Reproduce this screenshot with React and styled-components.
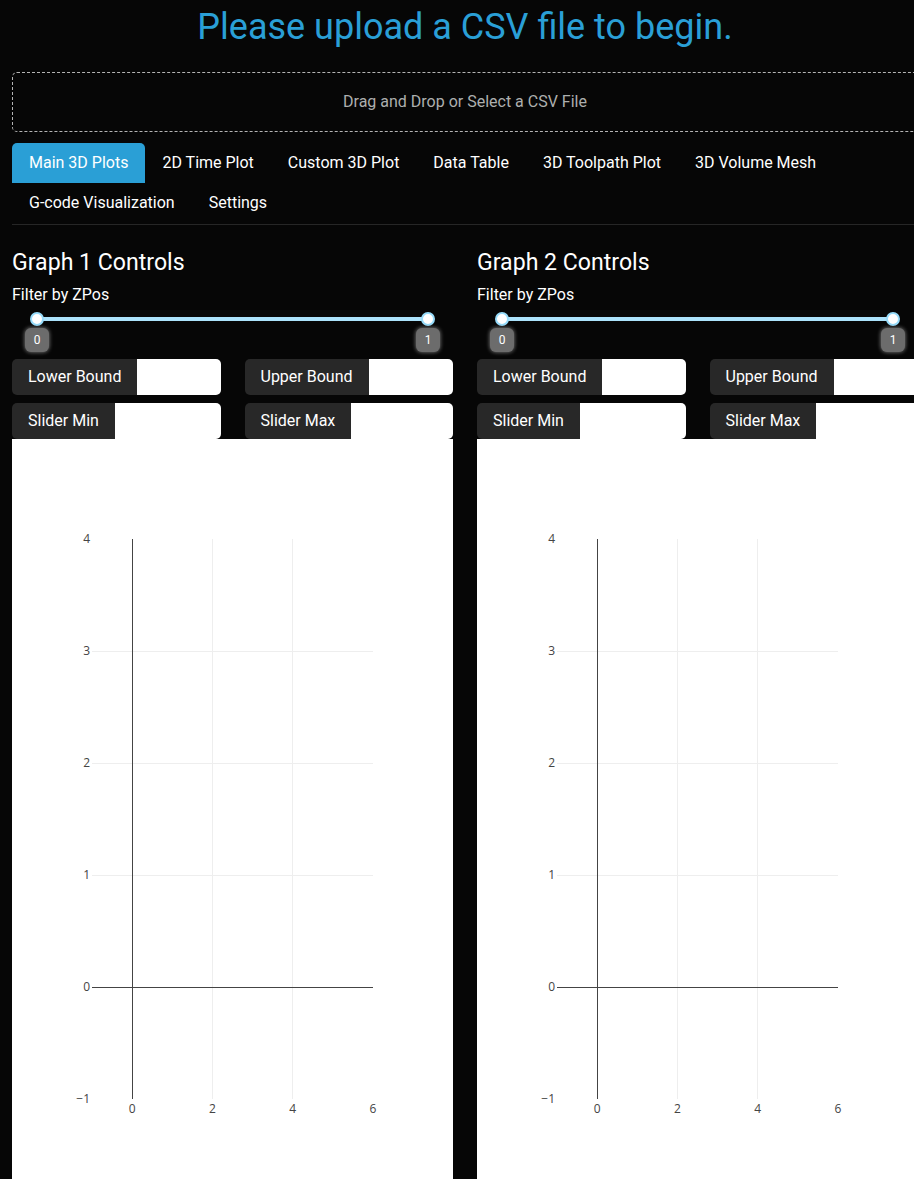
import React from 'react';
import styled, { createGlobalStyle } from 'styled-components';

const colors = {
    BG: '#060606',
    BLUE: '#2a9fd6',
    WHITE: '#ffffff',
    MUTED: '#adafae',
    GROUP: '#282828',
    BORDER: '#262626',
    TRACK: '#abe2fb',
    HANDLE: '#96dbfa',
    TIP: '#6c6c6c',
    AXIS: '#444444',
    GRID: '#eeeeee',
};

const TABS = [
    'Main 3D Plots',
    '2D Time Plot',
    'Custom 3D Plot',
    'Data Table',
    '3D Toolpath Plot',
    '3D Volume Mesh',
    'G-code Visualization',
    'Settings',
];

const App = () => {
    return (
        <Page>
            <GlobalStyle />
            <Title>Please upload a CSV file to begin.</Title>
            <Upload>Drag and Drop or Select a CSV File</Upload>
            <Tabs>
                {TABS.map((tab, i) => (
                    <Tab key={tab} active={i === 0}>{tab}</Tab>
                ))}
            </Tabs>
            <Columns>
                <GraphColumn index={1} />
                <GraphColumn index={2} />
            </Columns>
        </Page>
    );
}

const GraphColumn = ({ index }) => (
    <Column>
        <Heading>Graph {index} Controls</Heading>
        <FieldLabel>Filter by ZPos</FieldLabel>
        <SliderWrap>
            <Rail>
                <Handle pos={0} />
                <Handle pos={100} />
                <Tip pos={0}>0</Tip>
                <Tip pos={100}>1</Tip>
            </Rail>
        </SliderWrap>
        <InputGrid>
            <InputGroup>
                <GroupLabel>Lower Bound</GroupLabel>
                <GroupInput type="number" />
            </InputGroup>
            <InputGroup>
                <GroupLabel>Upper Bound</GroupLabel>
                <GroupInput type="number" />
            </InputGroup>
            <InputGroup>
                <GroupLabel>Slider Min</GroupLabel>
                <GroupInput type="number" />
            </InputGroup>
            <InputGroup>
                <GroupLabel>Slider Max</GroupLabel>
                <GroupInput type="number" />
            </InputGroup>
        </InputGrid>
        <GraphBox>
            <EmptyPlot />
        </GraphBox>
    </Column>
);

// plotly-like empty axes, x: -1..6, y: -1..4
const EmptyPlot = () => {
    const left = 80, top = 100, w = 281, h = 560;
    const px = (x) => left + (x + 1) * w / 7;
    const py = (y) => top + (4 - y) * h / 5;
    const xTicks = [0, 2, 4, 6];
    const yTicks = [4, 3, 2, 1, 0, -1];

    return (
        <svg width="441" height="740" shapeRendering="crispEdges">
            {[2, 4].map(x => (
                <line key={'gx' + x} x1={px(x)} x2={px(x)} y1={top} y2={top + h} stroke={colors.GRID} />
            ))}
            {[1, 2, 3].map(y => (
                <line key={'gy' + y} x1={left} x2={left + w} y1={py(y)} y2={py(y)} stroke={colors.GRID} />
            ))}
            <line x1={px(0)} x2={px(0)} y1={top} y2={top + h} stroke={colors.AXIS} />
            <line x1={left} x2={left + w} y1={py(0)} y2={py(0)} stroke={colors.AXIS} />
            <g fontFamily="'Open Sans', Verdana, Arial, sans-serif" fontSize="12" fill={colors.AXIS} shapeRendering="auto">
                {yTicks.map(y => (
                    <text key={'ty' + y} x={left - 2} y={py(y) + 4} textAnchor="end">
                        {y < 0 ? '\u2212' + Math.abs(y) : y}
                    </text>
                ))}
                {xTicks.map(x => (
                    <text key={'tx' + x} x={px(x)} y={top + h + 14} textAnchor="middle">{x}</text>
                ))}
            </g>
        </svg>
    );
}

//styles
const GlobalStyle = createGlobalStyle`
    html, body {
        margin: 0;
        background-color: ${colors.BG};
        overflow-x: hidden;
    }
    body {
        font-family: Roboto, 'Liberation Sans', sans-serif;
        color: ${colors.MUTED};
    }
    * {
        box-sizing: border-box;
    }
`

const Page = styled.div`
    width: 930px;
    padding: 0 12px;
`

const Title = styled.h1`
    margin: 6px 0 23px;
    font-size: 36px;
    font-weight: 400;
    line-height: 1.2;
    text-align: center;
    color: ${colors.BLUE};
`

const Upload = styled.div`
    height: 60px;
    line-height: 58px;
    border: 1px dashed #b4b4b4;
    border-radius: 5px;
    text-align: center;
    font-size: 16px;
    color: ${colors.MUTED};
`

const Tabs = styled.ul`
    display: flex;
    flex-wrap: wrap;
    list-style: none;
    margin: 11px 0 0;
    padding: 0 0 1px;
    border-bottom: 1px solid ${colors.BORDER};
`

const Tab = styled.li`
    padding: 8px 16px;
    border: 1px solid transparent;
    border-radius: 5px 5px 0 0;
    line-height: 22px;
    font-size: 16px;
    color: ${colors.WHITE};
    background-color: ${props => props.active ? colors.BLUE : 'transparent'};
    cursor: pointer;
`

const Columns = styled.div`
    display: grid;
    grid-template-columns: 441px 441px;
    column-gap: 24px;
    margin-top: 24px;
`

const Column = styled.div`
    display: flex;
    flex-direction: column;
`

const Heading = styled.h4`
    margin: 0 0 6px;
    font-size: 23.1px;
    font-weight: 400;
    line-height: 1.2;
    color: ${colors.WHITE};
`

const FieldLabel = styled.label`
    font-size: 16px;
    line-height: 24px;
    color: ${colors.WHITE};
`

const SliderWrap = styled.div`
    padding: 10px 25px 38px;
`

const Rail = styled.div`
    position: relative;
    height: 4px;
    border-radius: 6px;
    background-color: ${colors.TRACK};
`

const Handle = styled.div`
    position: absolute;
    top: -5px;
    left: ${props => props.pos}%;
    width: 14px;
    height: 14px;
    margin-left: -7px;
    border: 2px solid ${colors.HANDLE};
    border-radius: 50%;
    background-color: ${colors.WHITE};
`

const Tip = styled.div`
    position: absolute;
    top: 11px;
    left: ${props => props.pos}%;
    min-width: 24px;
    height: 24px;
    margin-left: -12px;
    padding: 6px 2px;
    border-radius: 6px;
    background-color: ${colors.TIP};
    box-shadow: 0 0 4px #8a8a8a;
    font-size: 12px;
    line-height: 1;
    text-align: center;
    color: ${colors.WHITE};
`

const InputGrid = styled.div`
    display: grid;
    grid-template-columns: minmax(0, 1fr) minmax(0, 1fr);
    gap: 8px 24px;
`

const InputGroup = styled.div`
    display: flex;
    min-width: 0;
    height: 36px;
`

const GroupLabel = styled.span`
    display: flex;
    align-items: center;
    padding: 0 16px;
    border-radius: 5px 0 0 5px;
    background-color: ${colors.GROUP};
    font-size: 16px;
    color: ${colors.WHITE};
    white-space: nowrap;
`

const GroupInput = styled.input`
    flex: 1;
    width: 0;
    min-width: 0;
    border: none;
    border-radius: 0 5px 5px 0;
    background-color: ${colors.WHITE};
    font: 16px Roboto, sans-serif;
    &:focus {
        outline: none;
    }
    &::-webkit-inner-spin-button {
        -webkit-appearance: none;
    }
`

const GraphBox = styled.div`
    height: 740px;
    background-color: ${colors.WHITE};
`

export default App;
